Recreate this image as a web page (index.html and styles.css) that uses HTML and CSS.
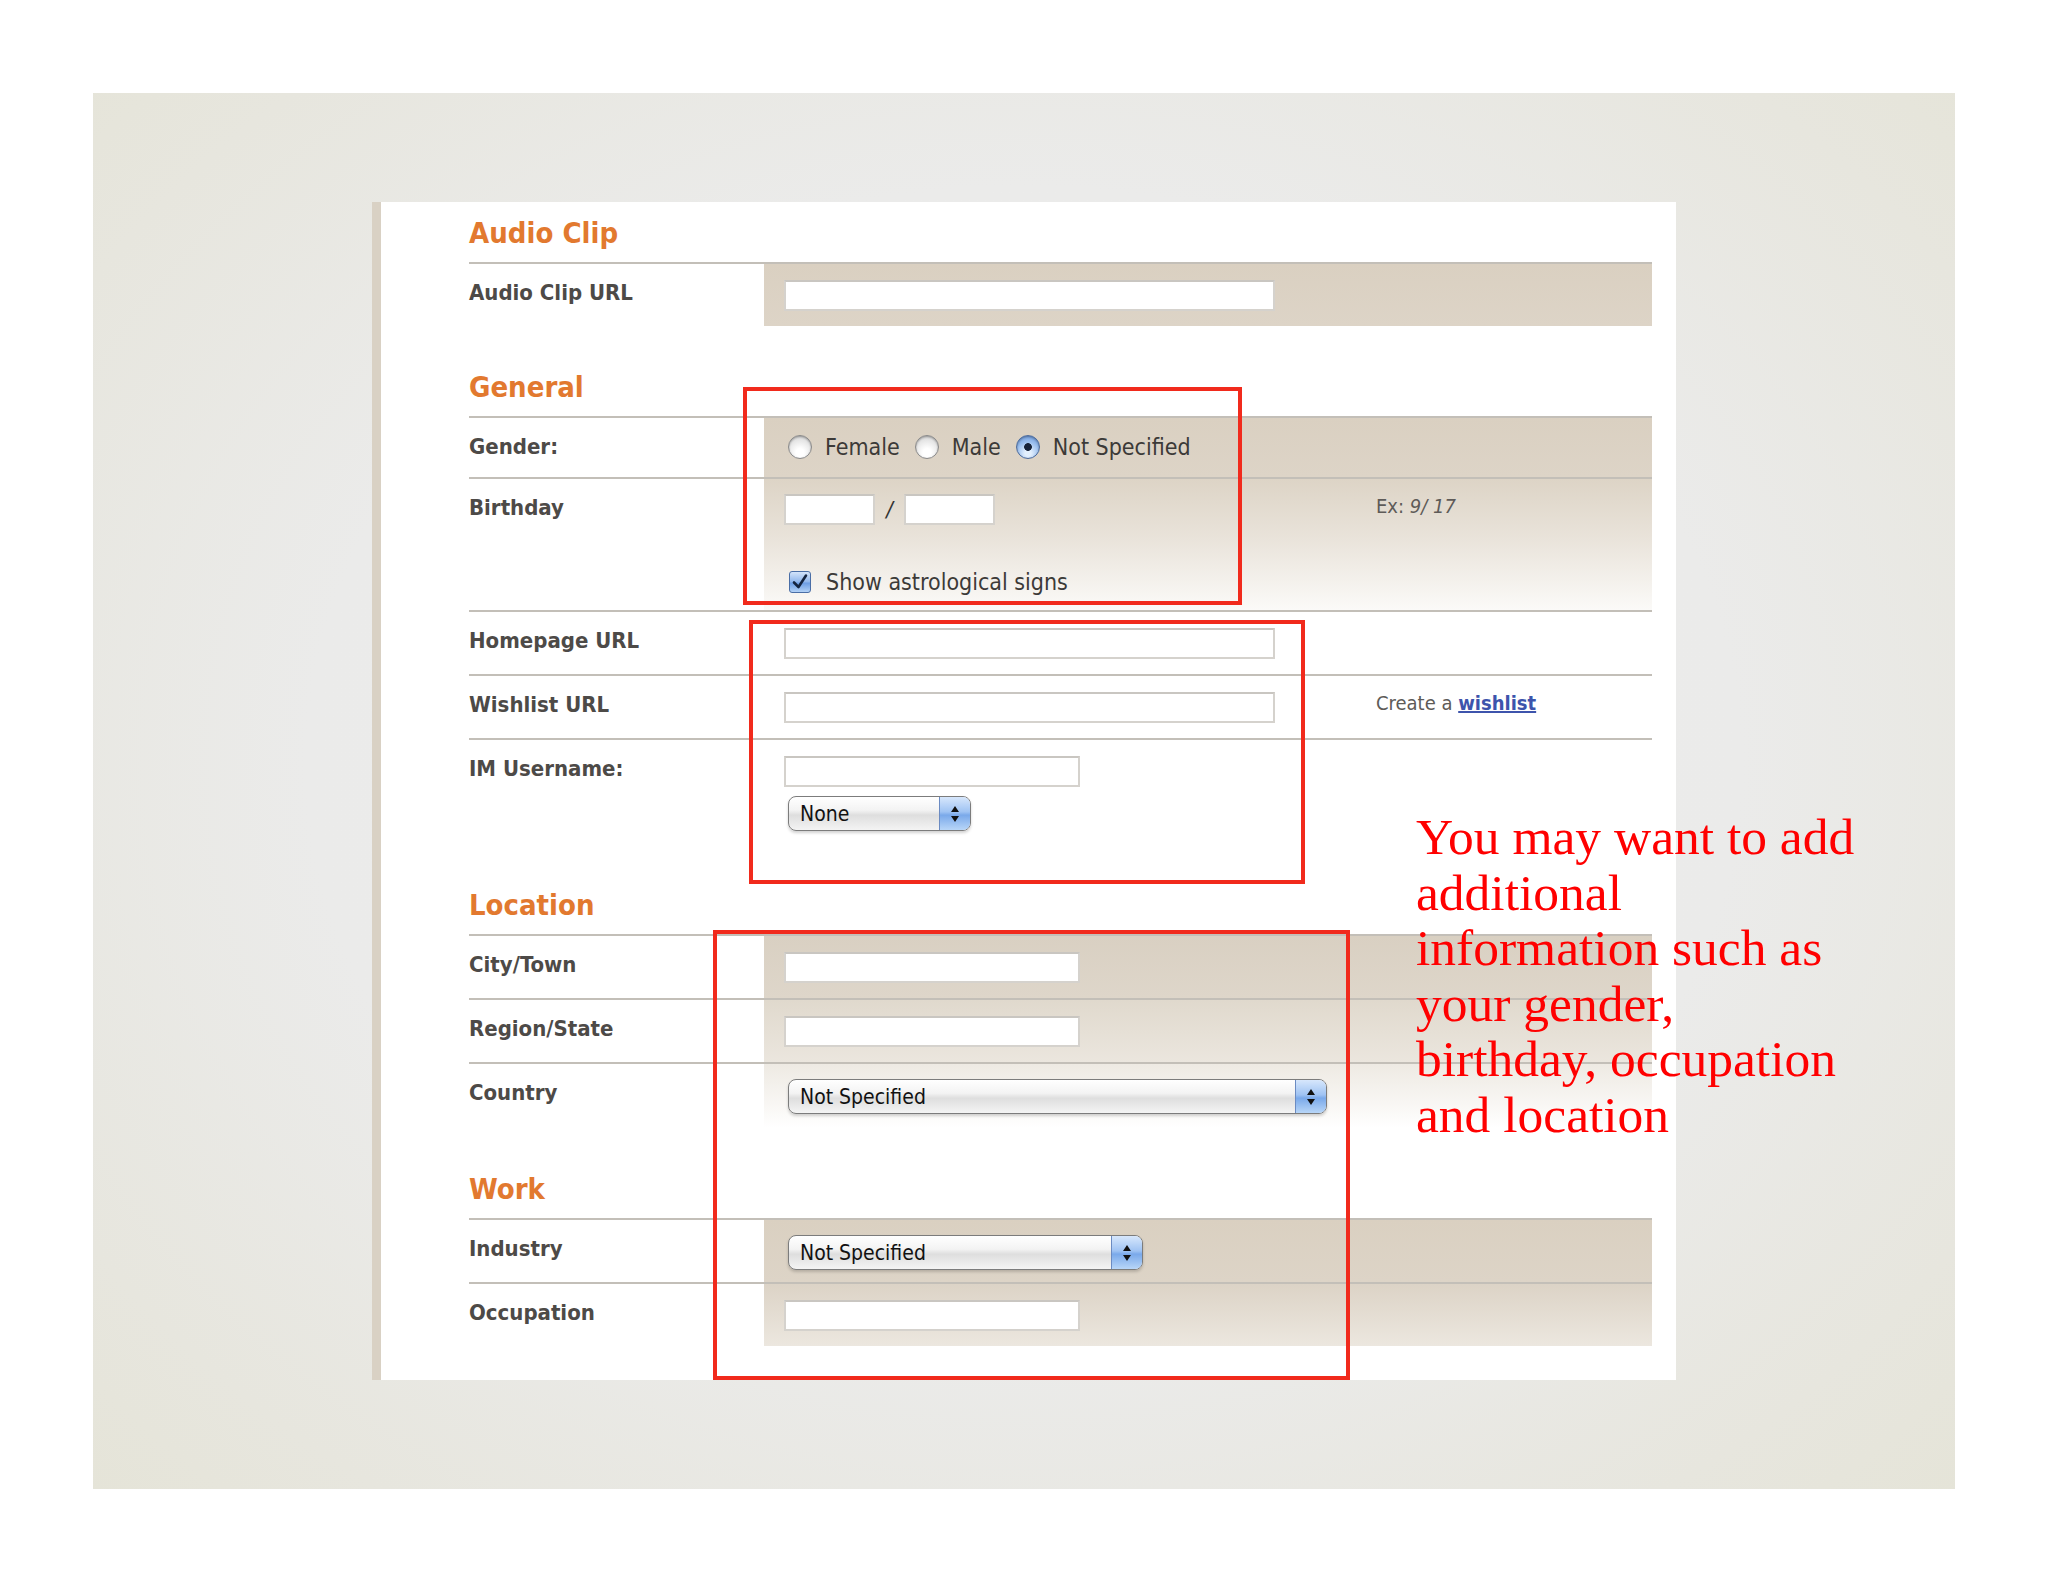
FILE: index.html
```html
<!DOCTYPE html>
<html lang="en">
<head>
<meta charset="utf-8">
<title>Profile - Additional information</title>
<link rel="stylesheet" href="styles.css">
</head>
<body>
<div class="slide">
  <div class="panel">
    <section class="sec">
      <h2 class="sec-title">Audio Clip</h2>
      <div class="row">
        <div class="lbl">Audio Clip URL</div>
        <div class="cell bg-tan"><span class="txt w-long"></span></div>
      </div>
    </section>

    <section class="sec sec-gap">
      <h2 class="sec-title">General</h2>
      <div class="row row-gender">
        <div class="lbl">Gender:</div>
        <div class="cell bg-tan">
          <div class="radios">
            <span class="radio"></span><span class="opt">Female</span>
            <span class="radio"></span><span class="opt">Male</span>
            <span class="radio on"></span><span class="opt">Not Specified</span>
          </div>
        </div>
      </div>
      <div class="row row-birthday">
        <div class="lbl">Birthday</div>
        <div class="cell bg-fade split">
          <div class="field">
            <div class="bday">
              <span class="txt w-short"></span><span class="slash">/</span><span class="txt w-short"></span>
            </div>
            <div class="check-line">
              <span class="checkbox">
                <svg viewBox="0 0 22 22" width="22" height="22"><path d="M5 11.5 L9.5 16 L17 4.5" fill="none" stroke="#14243f" stroke-width="2.6" stroke-linecap="round" stroke-linejoin="round"/></svg>
              </span>
              <span class="opt">Show astrological signs</span>
            </div>
          </div>
          <div class="hint">Ex: <i>9/ 17</i></div>
        </div>
      </div>
      <div class="row">
        <div class="lbl">Homepage URL</div>
        <div class="cell split">
          <div class="field"><span class="txt w-long"></span></div>
        </div>
      </div>
      <div class="row">
        <div class="lbl">Wishlist URL</div>
        <div class="cell split">
          <div class="field"><span class="txt w-long"></span></div>
          <div class="hint">Create a <a class="link" href="#">wishlist</a></div>
        </div>
      </div>
      <div class="row row-im">
        <div class="lbl">IM Username:</div>
        <div class="cell">
          <span class="txt w-mid"></span>
          <div class="select sel-none">
            <span class="select-text">None</span>
            <span class="stepper">
              <svg viewBox="0 0 10 18" width="10" height="18"><path d="M5 1 L9 7 H1 Z M5 17 L9 11 H1 Z" fill="#111"/></svg>
            </span>
          </div>
        </div>
      </div>
    </section>

    <section class="sec">
      <h2 class="sec-title">Location</h2>
      <div class="row">
        <div class="lbl">City/Town</div>
        <div class="cell bg-loc1"><span class="txt w-mid"></span></div>
      </div>
      <div class="row">
        <div class="lbl">Region/State</div>
        <div class="cell bg-loc2"><span class="txt w-mid"></span></div>
      </div>
      <div class="row row-country">
        <div class="lbl">Country</div>
        <div class="cell bg-loc3">
          <div class="select sel-country">
            <span class="select-text">Not Specified</span>
            <span class="stepper">
              <svg viewBox="0 0 10 18" width="10" height="18"><path d="M5 1 L9 7 H1 Z M5 17 L9 11 H1 Z" fill="#111"/></svg>
            </span>
          </div>
        </div>
      </div>
    </section>

    <section class="sec sec-gap">
      <h2 class="sec-title">Work</h2>
      <div class="row">
        <div class="lbl">Industry</div>
        <div class="cell bg-tan">
          <div class="select sel-industry">
            <span class="select-text">Not Specified</span>
            <span class="stepper">
              <svg viewBox="0 0 10 18" width="10" height="18"><path d="M5 1 L9 7 H1 Z M5 17 L9 11 H1 Z" fill="#111"/></svg>
            </span>
          </div>
        </div>
      </div>
      <div class="row">
        <div class="lbl">Occupation</div>
        <div class="cell bg-occ"><span class="txt w-mid"></span></div>
      </div>
    </section>
  </div>

  <div class="mark mark-general"></div>
  <div class="mark mark-links"></div>
  <div class="mark mark-location"></div>

  <p class="note">You may want to add<br>additional<br>information such as<br>your gender,<br>birthday, occupation<br>and location</p>
</div>
</body>
</html>
```

FILE: styles.css
```css
html, body {
  margin: 0;
  padding: 0;
  background: #ffffff;
}

body {
  width: 2048px;
  height: 1582px;
  overflow: hidden;
  padding: 93px 0 0 93px;
  box-sizing: border-box;
  font-family: "DejaVu Sans Condensed", "DejaVu Sans", sans-serif;
  font-stretch: condensed;
}

.slide {
  position: relative;
  width: 1862px;
  height: 1396px;
  box-sizing: border-box;
  padding: 109px 0 0 279px;
  background:
    radial-gradient(ellipse 70% 75% at 50% 48%, #ececec 0%, #ebebea 55%, #e7e6de 85%, #e5e4d8 100%);
}

.panel {
  width: 1304px;
  height: 1178px;
  box-sizing: border-box;
  background: #ffffff;
  border-left: 9px solid #d9d1c4;
  padding: 0 24px 0 88px;
}

.sec-gap {
  margin-top: 30px;
}

.sec-title {
  margin: 0;
  padding: 11px 0 9px;
  line-height: 40px;
  font-size: 29px;
  font-weight: bold;
  color: #e2792f;
}

.row {
  display: flex;
  height: 64px;
  box-sizing: border-box;
  border-top: 2px solid #c3bfb8;
}

.row-gender { height: 61px; }
.row-birthday { height: 133px; }
.row-im { height: 136px; }
.row-country { height: 66px; }

.lbl {
  width: 295px;
  flex: none;
  padding-top: 15px;
  line-height: 28px;
  font-size: 22px;
  font-weight: bold;
  color: #4d4a47;
}

.cell {
  flex: 1;
  padding: 16px 0 0 20px;
  box-sizing: border-box;
  display: flex;
  flex-direction: column;
  align-items: flex-start;
}

.cell.split {
  flex-direction: row;
}

.field {
  width: 592px;
  flex: none;
}

.bg-tan { background: linear-gradient(#dad0c1, #ddd4c7); }
.bg-fade { background: linear-gradient(#ddd4c6 0%, #e9e3da 45%, #fbfaf8 100%); }
.bg-loc1 { background: linear-gradient(#d9d0c2, #ded6ca); }
.bg-loc2 { background: linear-gradient(#e0d9cd, #ebe6de); }
.bg-loc3 { background: linear-gradient(#eeeae3 0%, #f8f6f3 60%, #ffffff 100%); }
.bg-occ { background: linear-gradient(#dcd3c6, #ece7df); }

.txt {
  display: block;
  height: 31px;
  box-sizing: border-box;
  background: #ffffff;
  border: 2px solid #d5d2cd;
  border-top-color: #c9c6c1;
}

.w-long { width: 491px; }
.w-mid { width: 296px; }
.w-short { width: 91px; }

.radios {
  display: flex;
  align-items: center;
  height: 28px;
  margin-top: -1px;
  margin-left: 4px;
}

.radio {
  width: 24px;
  height: 24px;
  flex: none;
  box-sizing: border-box;
  border-radius: 50%;
  border: 1.5px solid #8a8a8a;
  background: radial-gradient(circle at 50% 75%, #ffffff 20%, #e4e4e4 65%, #c8c8c8 100%);
  box-shadow: inset 0 1px 2px rgba(0, 0, 0, 0.3);
  margin-right: 13px;
}

.radio.on {
  border-color: #4c6b9c;
  background:
    radial-gradient(circle at 50% 50%, #17233a 0 3.5px, transparent 4.2px),
    radial-gradient(circle at 50% 78%, #e2effd 15%, #9cc0ef 55%, #5f8fd6 100%);
}

.opt {
  font-size: 23px;
  line-height: 28px;
  color: #3c3a38;
  margin-right: 15px;
}

.bday {
  display: flex;
  align-items: center;
  margin-top: -1px;
}

.slash {
  width: 29px;
  text-align: center;
  font-size: 22px;
  font-style: italic;
  color: #333;
}

.check-line {
  display: flex;
  align-items: center;
  height: 28px;
  margin-top: 43px;
  margin-left: 5px;
}

.checkbox {
  width: 22px;
  height: 22px;
  flex: none;
  box-sizing: border-box;
  border: 1.5px solid #4a6ea6;
  border-radius: 3px;
  background: linear-gradient(#d3e4fa, #8eb5ec 50%, #6c9de4 55%, #b2d1f6);
  margin-right: 15px;
  display: flex;
}

.checkbox svg {
  display: block;
  margin: -1.5px;
}

.hint {
  line-height: 22px;
  font-size: 20px;
  color: #5e5b58;
}

.hint i {
  font-style: italic;
}

.link {
  color: #3d54ac;
  font-weight: bold;
  text-decoration: underline;
}

.select {
  display: flex;
  align-items: center;
  height: 35px;
  box-sizing: border-box;
  margin-left: 4px;
  border: 1.5px solid #7c7c7c;
  border-radius: 8px;
  overflow: hidden;
  background: linear-gradient(#ffffff 0%, #f3f3f3 40%, #dedede 55%, #f4f4f4 100%);
  box-shadow: 0 2px 3px rgba(0, 0, 0, 0.18);
}

.sel-none { width: 183px; margin-top: 9px; }
.sel-country { width: 539px; margin-top: -1px; }
.sel-industry { width: 355px; margin-top: -1px; }

.select-text {
  flex: 1;
  padding-left: 11px;
  font-size: 21px;
  line-height: 28px;
  color: #111111;
}

.stepper {
  width: 30px;
  height: 100%;
  flex: none;
  display: flex;
  align-items: center;
  justify-content: center;
  border-left: 1px solid #6b8bc2;
  background: linear-gradient(#d7e7fc 0%, #9fc3f3 45%, #7aa9ea 55%, #b8d6f8 100%);
}

.mark {
  position: absolute;
  box-sizing: border-box;
  border: 4px solid #f12a1c;
}

.mark-general { left: 650px; top: 294px; width: 499px; height: 218px; }
.mark-links { left: 656px; top: 527px; width: 556px; height: 264px; }
.mark-location { left: 620px; top: 837px; width: 637px; height: 450px; }

.note {
  position: absolute;
  left: 1323px;
  top: 716px;
  margin: 0;
  font-family: "Liberation Serif", serif;
  font-size: 51.5px;
  line-height: 55.6px;
  color: #ff0000;
}
```
